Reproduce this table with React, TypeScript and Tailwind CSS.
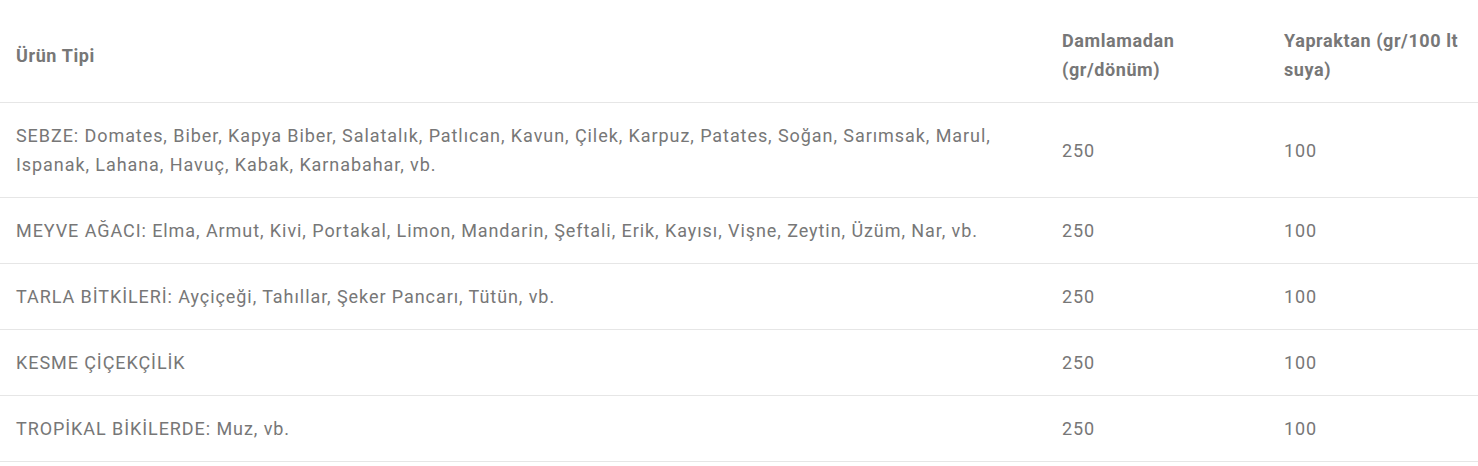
import React from 'react'

const rows = [
  'SEBZE: Domates, Biber, Kapya Biber, Salatalık, Patlıcan, Kavun, Çilek, Karpuz, Patates, Soğan, Sarımsak, Marul, Ispanak, Lahana, Havuç, Kabak, Karnabahar, vb.',
  'MEYVE AĞACI: Elma, Armut, Kivi, Portakal, Limon, Mandarin, Şeftali, Erik, Kayısı, Vişne, Zeytin, Üzüm, Nar, vb.',
  'TARLA BİTKİLERİ: Ayçiçeği, Tahıllar, Şeker Pancarı, Tütün, vb.',
  'KESME ÇİÇEKÇİLİK',
  'TROPİKAL BİKİLERDE: Muz, vb.',
]

const App = () => {
  return (
    <div className="min-h-screen bg-white pt-2 font-['Roboto',sans-serif] text-[18px] leading-[29px] tracking-[0.93px] text-[#777777]">
      <table className="w-full border-collapse text-left">
        <thead>
          <tr className="border-b border-[#e6e6e6] tracking-[0.6px]">
            <th className="px-4 py-[18px] align-middle font-bold">Ürün Tipi</th>
            <th className="w-[222px] px-4 py-[18px] align-middle font-bold">
              Damlamadan (gr/dönüm)
            </th>
            <th className="w-[210px] px-4 py-[18px] align-middle font-bold">
              Yapraktan (gr/100 lt suya)
            </th>
          </tr>
        </thead>
        <tbody>
          {rows.map((row, index) => (
            <tr className="border-b border-[#e6e6e6]" key={index}>
              <td className="px-4 py-[18px] align-middle">{row}</td>
              <td className="px-4 py-[18px] align-middle">250</td>
              <td className="px-4 py-[18px] align-middle">100</td>
            </tr>
          ))}
        </tbody>
      </table>
    </div>
  )
}

export default App
